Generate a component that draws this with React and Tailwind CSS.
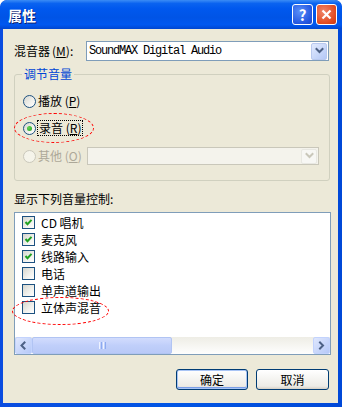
import React from "react";

const Chevron = ({ dir = "down", color = "#4d6185" }) => {
  const paths = {
    down: "M1.5 2 L4.5 5 L7.5 2",
    left: "M5.5 1.5 L2.5 4.5 L5.5 7.5",
    right: "M3 1.5 L6 4.5 L3 7.5",
  };
  return (
    <svg width="9" height="9" viewBox="0 0 9 9">
      <path d={paths[dir]} fill="none" stroke={color} strokeWidth="2" strokeLinecap="square" />
    </svg>
  );
};

const Radio = ({ checked, disabled }) => (
  <span
    className={
      "flex h-[13px] w-[13px] shrink-0 items-center justify-center rounded-full border " +
      (disabled
        ? "border-[#cac8bb] bg-[#f5f4ea]"
        : "border-[#1c5180] bg-[linear-gradient(135deg,#d6d6ce_0%,#f2f2ee_60%,#ffffff_100%)]")
    }
  >
    {checked && (
      <span className="h-[5px] w-[5px] rounded-full bg-[radial-gradient(circle_at_35%_35%,#65d455,#21a121)]" />
    )}
  </span>
);

const Check = ({ checked }) => (
  <span className="flex h-[13px] w-[13px] shrink-0 items-center justify-center border border-[#1c5180] bg-[linear-gradient(135deg,#d6d6ce_0%,#f2f2ee_60%,#ffffff_100%)]">
    {checked && (
      <svg width="9" height="9" viewBox="0 0 9 9">
        <path d="M1.5 4 L3.5 6.2 L7.5 1.8" fill="none" stroke="#21a121" strokeWidth="2" />
      </svg>
    )}
  </span>
);

const items = [
  ["CD 唱机", true],
  ["麦克风", true],
  ["线路输入", true],
  ["电话", false],
  ["单声道输出", false],
  ["立体声混音", false],
];

export default function App() {
  return (
    <div className="relative flex h-[407px] w-[342px] flex-col overflow-hidden rounded-t-[7px] bg-[linear-gradient(to_right,#0a4ce0,#0055e5_50%,#0048d8)] font-['Noto_Sans_CJK_SC','Liberation_Sans',sans-serif] text-[12px] leading-[14px] text-black">
      {/* Title bar */}
      <div className="flex h-[29px] shrink-0 items-center rounded-t-[7px] bg-[linear-gradient(to_bottom,#3b8cf5_0%,#0a63f0_12%,#0058ee_30%,#0054e6_60%,#0058f0_85%,#0046d0_100%)]">
        <span className="pl-[8px] text-[14px] font-bold leading-[16px] text-white [text-shadow:1px_1px_0_#0a1e6e]">
          属性
        </span>
        <div className="ml-auto flex gap-[3px] pr-[5px]">
          <div className="flex h-[21px] w-[21px] items-center justify-center rounded-[3px] border border-white bg-[radial-gradient(circle_at_35%_35%,#5a8ff8,#2457e0_70%,#1c46c8)] text-[15px] font-bold leading-none text-white">
            ?
          </div>
          <div className="flex h-[21px] w-[21px] items-center justify-center rounded-[3px] border border-white bg-[radial-gradient(circle_at_35%_35%,#f0866a,#e0491f_70%,#c83a14)]">
            <svg width="11" height="11" viewBox="0 0 11 11">
              <path d="M1.5 1.5 L9.5 9.5 M9.5 1.5 L1.5 9.5" stroke="white" strokeWidth="2.2" />
            </svg>
          </div>
        </div>
      </div>

      {/* Client area */}
      <div className="mb-[4px] ml-[3px] mr-[4px] flex flex-1 flex-col bg-[#ece9d8] pl-[11px] pr-[7px] pt-[12px]">
        {/* Mixer row */}
        <div className="flex h-[20px] items-center">
          <span className="w-[72px] shrink-0">
            混音器<span className="ml-[2px]">(<u>M</u>)</span>:
          </span>
          <div className="mr-[2px] flex h-[20px] flex-1 items-center border border-[#7f9db9] bg-white pl-[2px] pr-[1px]">
            <span className="flex-1 font-['Liberation_Mono',monospace] text-[12px] tracking-[-1.2px]">
              SoundMAX Digital Audio
            </span>
            <div className="flex h-[17px] w-[16px] items-center justify-center rounded-[2px] border border-[#b9c9ef] bg-[linear-gradient(135deg,#e1eafe,#b4c8f6)]">
              <Chevron dir="down" />
            </div>
          </div>
        </div>

        {/* Group box */}
        <div className="relative mr-[1px] mt-[13px] flex h-[107px] flex-col rounded-[3px] border border-[#d0d0bf] pl-[8px] pt-[16px]">
          <span className="absolute -top-[8px] left-[7px] bg-[#ece9d8] px-[2px] text-[#0046d5]">
            调节音量
          </span>
          <div className="flex h-[20px] items-center gap-[2px]">
            <Radio />
            <span>
              播放 (<u>P</u>)
            </span>
          </div>
          <div className="mt-[7px] flex h-[20px] items-center gap-[1px]">
            <Radio checked />
            <span className="border border-dotted border-black px-[1px]">
              录音 (<u>R</u>)
            </span>
          </div>
          <div className="mt-[9px] flex h-[18px] items-center">
            <Radio disabled />
            <span className="ml-[2px] w-[49px] text-[#aca899]">
              其他 (<u>O</u>)
            </span>
            <div className="flex h-[18px] w-[232px] items-center justify-end border border-[#c9c7ba] bg-[#f4f3ec] pr-[1px]">
              <div className="flex h-[15px] w-[16px] items-center justify-center rounded-[2px] bg-[#f7f7f4] border border-[#e8e8e2]">
                <Chevron dir="down" color="#c9c7ba" />
              </div>
            </div>
          </div>
        </div>

        {/* List label */}
        <div className="mt-[11px] h-[14px]">显示下列音量控制:</div>

        {/* List */}
        <div className="mt-[6px] flex h-[143px] flex-col border border-[#7f9db9] bg-white">
          <div className="flex flex-1 flex-col pl-[7px] pt-[1px]">
            {items.map(([label, checked]) => (
              <div key={label} className="flex h-[17px] items-center gap-[6px]">
                <Check checked={checked} />
                <span>{label}</span>
              </div>
            ))}
          </div>
          {/* Horizontal scrollbar */}
          <div className="flex h-[17px] items-stretch bg-[linear-gradient(to_bottom,#eeede5,#fefefe)]">
            <div className="flex w-[17px] items-center justify-center rounded-[2px] border border-[#c3d3fd] bg-[linear-gradient(135deg,#dfe7fd,#b6c9f8)]">
              <Chevron dir="left" />
            </div>
            <div className="relative flex w-[140px] items-center justify-center rounded-[2px] border border-[#b1c4f3] bg-[linear-gradient(to_bottom,#d2dcfd,#c0cffa_50%,#b9c9f7)]">
              <div className="flex gap-[1px]">
                <span className="h-[7px] w-[1px] bg-[#eef3ff]" />
                <span className="h-[7px] w-[1px] bg-[#8caaf0]" />
                <span className="h-[7px] w-[1px] bg-[#eef3ff]" />
                <span className="h-[7px] w-[1px] bg-[#8caaf0]" />
              </div>
            </div>
            <div className="flex-1" />
            <div className="flex w-[17px] items-center justify-center rounded-[2px] border border-[#c3d3fd] bg-[linear-gradient(135deg,#dfe7fd,#b6c9f8)]">
              <Chevron dir="right" />
            </div>
          </div>
        </div>

        {/* Buttons */}
        <div className="mr-[2px] mt-[14px] flex justify-end gap-[8px]">
          <button className="flex h-[21px] w-[72px] items-center justify-center rounded-[3px] border border-[#003c74] bg-[linear-gradient(to_bottom,#ffffff,#ecebe6_85%,#d6d0c5)] shadow-[inset_0_0_0_1px_#a8c4f5,inset_0_-1px_0_1px_#7a9ee8]">
            确定
          </button>
          <button className="flex h-[21px] w-[73px] items-center justify-center rounded-[3px] border border-[#003c74] bg-[linear-gradient(to_bottom,#ffffff,#ecebe6_85%,#d6d0c5)]">
            取消
          </button>
        </div>
      </div>

      {/* Red annotation ellipses */}
      <div className="pointer-events-none absolute left-[14px] top-[113px] h-[30px] w-[80px] rounded-[50%] border border-dashed border-[#ff0000]" />
      <div className="pointer-events-none absolute left-[12px] top-[297px] h-[28px] w-[97px] rounded-[50%] border border-dashed border-[#ff0000]" />
    </div>
  );
}
